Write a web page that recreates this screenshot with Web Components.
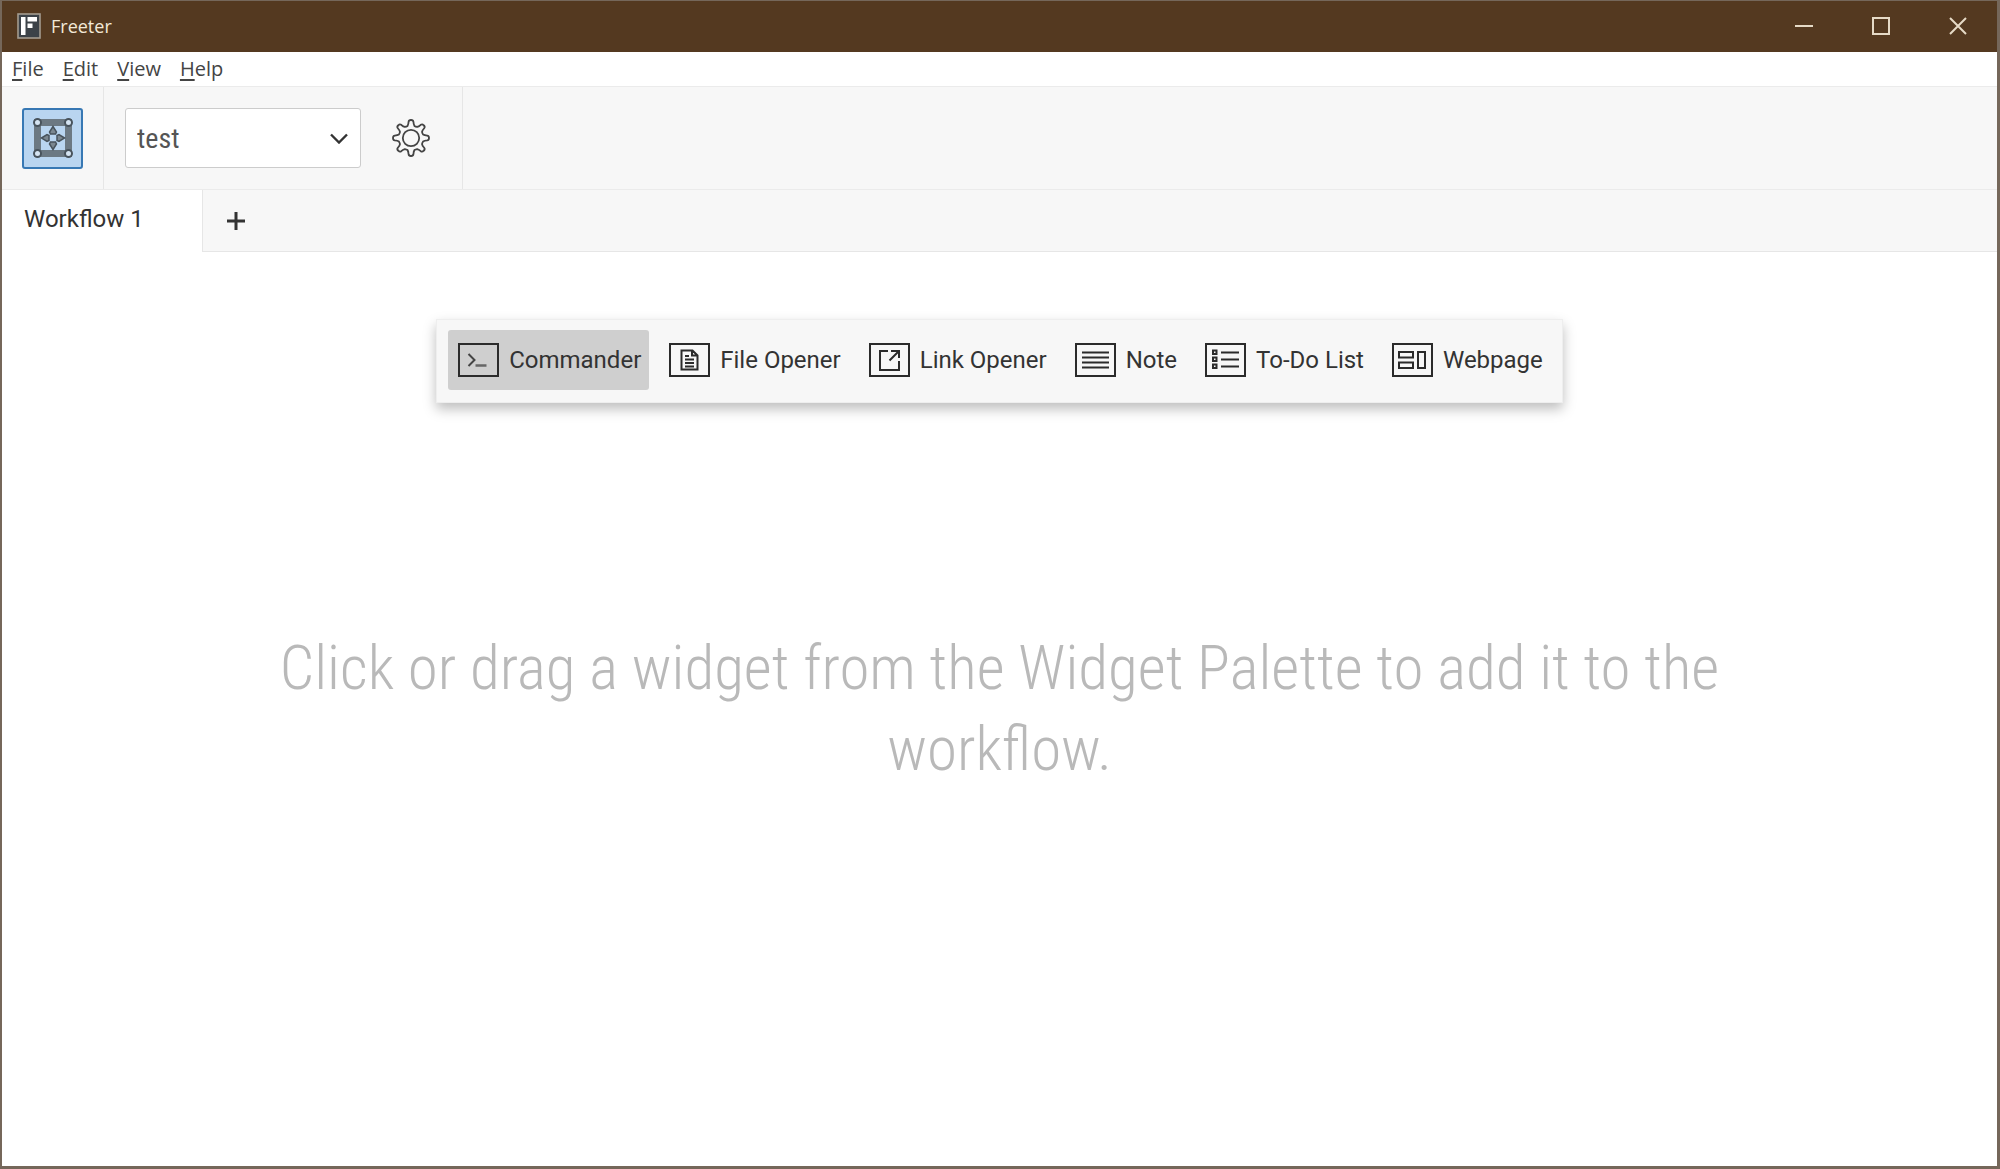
<!DOCTYPE html>
<html lang="en">
<head>
<meta charset="utf-8">
<title>Freeter</title>
<style>
  html, body { height: 100%; margin: 0; }
  body { font-family: Roboto, "Liberation Sans", sans-serif; font-size: 24px; color: #333; }
</style>
</head>
<body>
<app-window>
  <title-bar slot="title">Freeter</title-bar>
  <menu-bar slot="menu"></menu-bar>
  <top-bar slot="toolbar"></top-bar>
  <workflow-tabs slot="tabs">Workflow 1</workflow-tabs>
  <work-table>
    <widget-palette slot="palette">
      <palette-item icon="commander" active>Commander</palette-item>
      <palette-item icon="file">File Opener</palette-item>
      <palette-item icon="link">Link Opener</palette-item>
      <palette-item icon="note">Note</palette-item>
      <palette-item icon="todo">To-Do List</palette-item>
      <palette-item icon="web">Webpage</palette-item>
    </widget-palette>
    Click or drag a widget from the Widget Palette to add it to the workflow.
  </work-table>
</app-window>
<script>
const define = (name, html) => customElements.define(name, class extends HTMLElement {
  connectedCallback() {
    if (this.shadowRoot) return;
    this.attachShadow({ mode: "open" }).innerHTML =
      `<style>*{box-sizing:border-box}:host{box-sizing:border-box}button{font:inherit;color:inherit;border:0;background:none;padding:0;margin:0}svg{display:block}</style>` +
      (typeof html === "function" ? html(this) : html);
  }
});

define("app-window", `
<style>
  :host { display: flex; flex-direction: column; height: 100vh; background: #fff;
    border: solid #75675a; border-width: 1px 3px 3px 2px; }
</style>
<slot name="title"></slot><slot name="menu"></slot><slot name="toolbar"></slot><slot name="tabs"></slot><slot></slot>`);

define("title-bar", `
<style>
  :host { display: flex; align-items: center; height: 51px; background: #543920; color: #f3e9d8;
    font: 18px/24px "Open Sans", "Noto Sans", sans-serif; padding: 0 1px 2px 15px; }
  .name { flex: 1; margin-left: 10px; }
  button { width: 77px; height: 48px; display: grid; place-items: center; }
  svg { fill: none; stroke: #e6dac6; stroke-width: 2; }
</style>
<svg width="24" height="26" viewBox="0 0 24 26"><rect x="1" y="1" width="22" height="24" fill="#3c4248" stroke="#a39c90" stroke-width="1.6"/><path d="M4 4h4.5v18H4zM10.500 4H20v4.500h-9.500zM10.500 10.500h5v4.500h-5z" fill="#fff" stroke="none"/></svg>
<span class="name"><slot></slot></span>
<button aria-label="Minimize"><svg width="18" height="18"><path d="M0 9h18"/></svg></button>
<button aria-label="Maximize"><svg width="18" height="18"><path d="M1 1h16v16H1z"/></svg></button>
<button aria-label="Close"><svg width="18" height="18"><path d="M1 1l16 16M17 1L1 17"/></svg></button>`);

define("menu-bar", `
<style>
  :host { display: flex; align-items: center; gap: 19px; height: 34px; padding-left: 10px;
    font: 20px/28px "Open Sans", "Noto Sans", sans-serif; color: #444; }
  u { text-decoration-thickness: 2px; text-underline-offset: 3px; }
</style>
<button><u>F</u>ile</button><button><u>E</u>dit</button><button><u>V</u>iew</button><button><u>H</u>elp</button>`);

const gear = () => {
  let d = "";
  for (let i = 0; i < 8; i++) {
    const p = (r, a) => { const t = (i * 45 + a) * Math.PI / 180; return (20 + r * Math.sin(t)).toFixed(2) + " " + (20 - r * Math.cos(t)).toFixed(2); };
    d += (i ? "L" : "M") + p(12.6, -16) + "Q" + p(13.6, -11) + " " + p(16.4, -8.5) + "Q" + p(18.2, -7) + " " + p(18, 0)
      + "Q" + p(18.2, 7) + " " + p(16.4, 8.5) + "Q" + p(13.6, 11) + " " + p(12.6, 16) + "Q" + p(12.2, 22.5) + " " + p(12.6, 29);
  }
  return d + "Z";
};

define("top-bar", `
<style>
  :host { display: flex; height: 104px; background: #f7f7f7; border: solid #ebebeb; border-width: 1px 0; }
  .group { display: flex; align-items: center; border-right: 1px solid #e6e6e6; }
  .edit { padding: 0 20px; }
  .edit button { width: 61px; height: 61px; background: #b9d5f0; border: 2px solid #3778b4; border-radius: 3px; display: grid; place-items: center; }
  .project { padding: 0 21px; gap: 19px; }
  label { display: grid; align-items: center; }
  select { grid-area: 1/1; appearance: none; width: 236px; height: 60px; border: 1px solid #ccc; border-radius: 3px; background: #fff;
    font: 28px/36px "Roboto Condensed", Roboto, sans-serif; color: #555; padding: 2px 11px 0; outline: 0; }
  label svg { grid-area: 1/1; justify-self: end; margin-right: 13px; pointer-events: none; }
  .gear { width: 61px; height: 61px; display: grid; place-items: center; }
</style>
<div class="group edit"><button aria-label="Edit mode" aria-pressed="true">
<svg width="42" height="42" viewBox="0 0 42 42" fill="none" stroke="#48535c" stroke-width="1.500">
  <rect x="5.500" y="5.500" width="31" height="31" stroke="#6c7983" stroke-width="7"/>
  <g fill="#d5e4f2" stroke-width="2"><circle cx="5.500" cy="5.500" r="3.500"/><circle cx="36.500" cy="5.500" r="3.500"/><circle cx="5.500" cy="36.500" r="3.500"/><circle cx="36.500" cy="36.500" r="3.500"/></g>
  <path d="M21 9.500l3.500 5.500-1 2h-5l-1-2zM21 32.500l3.500-5.500-1-2h-5l-1 2zM9.500 21l5.500-3.500 2 1v5l-2 1zM32.500 21l-5.500-3.500-2 1v5l2 1z" fill="#7b8790"/>
</svg></button></div>
<div class="group project">
  <label><select aria-label="Project"><option>test</option></select>
  <svg width="18" height="11" viewBox="0 0 18 11" fill="none" stroke="#333" stroke-width="2.400"><path d="M1 1.500l8 8 8-8"/></svg></label>
  <button class="gear" aria-label="Manage projects"><svg width="40" height="40" viewBox="0 0 40 40" fill="none" stroke="#444" stroke-width="1.800" stroke-linejoin="round"><path d="${gear()}"/><circle cx="20" cy="20" r="8.200"/></svg></button>
</div>`);

define("workflow-tabs", `
<style>
  :host { display: flex; height: 62px; background: #f7f7f7; color: #333; }
  .tab { width: 201px; background: #fff; border-right: 1px solid #e6e6e6; text-align: left; padding: 0 22px 4px; }
  .rest { flex: 1; border-bottom: 1px solid #e6e6e6; display: flex; align-items: center; }
  .add { width: 66px; height: 61px; display: grid; place-items: center; }
</style>
<button class="tab" role="tab" aria-selected="true"><slot></slot></button>
<div class="rest"><button class="add" aria-label="Add workflow"><svg width="18" height="18" stroke="#333" stroke-width="3"><path d="M9 0v18M0 9h18"/></svg></button></div>`);

define("work-table", `
<style>
  :host { flex: 1; display: grid; position: relative; place-items: center; }
  .palette { position: absolute; top: 67px; left: 0; right: 0; display: flex; justify-content: center; }
  p { margin: 0; padding: 0 12%; text-align: center; font: 300 61px/81px "Roboto Condensed", Roboto, sans-serif; color: #b9b9b9; }
</style>
<div class="palette"><slot name="palette"></slot></div>
<p><slot></slot></p>`);

define("widget-palette", `
<style>
  :host { display: flex; gap: 10px; padding: 10px 11px 12px; background: #f7f7f7; border: 1px solid #eee; box-shadow: 0 6px 12px rgba(0,0,0,.26); }
</style><slot></slot>`);

const icons = {
  commander: `<path d="M10.500 11l6 6-6 6" stroke="#444"/><path d="M17.500 22.500h11" stroke="#666" stroke-width="2.500"/>`,
  file: `<path d="M12.500 7.500h11l5 5v14h-16zM23 7.500v5h5.500M16 13h4M16 16.500h9M16 20h9M16 23.500h9"/>`,
  link: `<path d="M19 8h-8v19h19v-9M22 8h8v7M30 8L20.500 17.500"/>`,
  note: `<path d="M7 9.500h27M7 14.500h27M7 19.500h27M7 24.500h27"/>`,
  todo: `<path d="M16 9.500h18M16 16.500h18M16 23.500h18M8 7.500h3.500v3.500H8zM8 14.500h3.500v3.500H8zM8 21.500h3.500v3.500H8z"/>`,
  web: `<path d="M7 9h14v5.500H7zM7 19.500h14V25H7zM26 9h7v16h-7z"/>`
};
define("palette-item", el => `
<style>
  button { display: flex; align-items: center; gap: 10px; height: 60px; padding: 0 8px 0 10px; border-radius: 3px; white-space: nowrap; color: #333; line-height: 32px; }
  :host([active]) button { background: #cfcfcf; }
</style>
<button><svg width="41" height="34" viewBox="0 0 41 34" fill="none" stroke="#2b2b2b" stroke-width="2"><path d="M1 1h39v32H1z"/>${icons[el.getAttribute("icon")]}</svg><span><slot></slot></span></button>`);
</script>
</body>
</html>
